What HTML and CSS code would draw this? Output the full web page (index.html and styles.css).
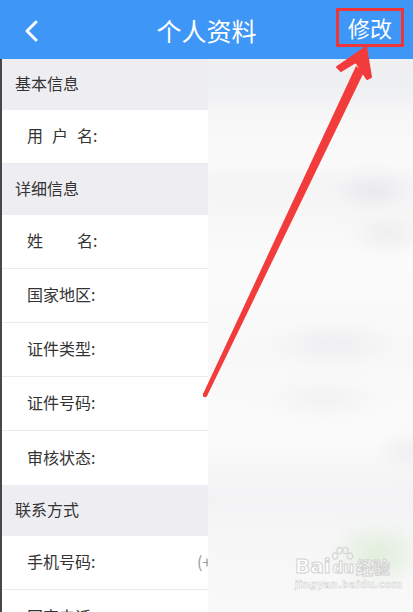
FILE: index.html
```html
<!DOCTYPE html>
<html lang="zh-CN">
<head>
    <meta charset="UTF-8">
    <meta name="viewport" content="width=device-width, initial-scale=1.0">
    <title>个人资料</title>
    <link rel="stylesheet" href="styles.css">
</head>
<body>
    <div class="page">
        <header class="topbar">
            <span class="back">
                <svg width="16" height="24" viewBox="0 0 16 24">
                    <polyline points="12,3 3,12 12,21" fill="none" stroke="#fff" stroke-width="3" stroke-linecap="round" stroke-linejoin="round"/>
                </svg>
            </span>
            <h1 class="title">个人资料</h1>
            <span class="edit"><span class="edit-box">修改</span></span>
        </header>

        <div class="list">
            <div class="section">基本信息</div>
            <div class="row"><span class="label"><span class="name">用户名</span>:</span></div>

            <div class="section">详细信息</div>
            <div class="row"><span class="label"><span class="name">姓名</span>:</span></div>
            <div class="row"><span class="label">国家地区:</span></div>
            <div class="row"><span class="label">证件类型:</span></div>
            <div class="row"><span class="label">证件号码:</span></div>
            <div class="row last"><span class="label">审核状态:</span></div>

            <div class="section">联系方式</div>
            <div class="row"><span class="label">手机号码:</span><span class="value">(+</span></div>
            <div class="row last"><span class="label">固定电话:</span></div>

            <!-- 打码区域 -->
            <div class="mosaic"><div class="mosaic-inner"></div></div>
        </div>

        <div class="watermark">
            <div class="wm-logo">
                <span class="wm-bai">Bai</span>
                <span class="wm-du">
                    <svg class="paw" width="26" height="16" viewBox="0 0 26 16">
                        <g fill="none" stroke="#d6d6d6" stroke-width="1.2">
                            <ellipse cx="6" cy="10" rx="2.6" ry="3.2"/>
                            <ellipse cx="10.5" cy="4.5" rx="2.6" ry="3.2"/>
                            <ellipse cx="16.5" cy="4.5" rx="2.6" ry="3.2"/>
                            <ellipse cx="21" cy="10" rx="2.6" ry="3.2"/>
                        </g>
                    </svg>du</span>
                <span class="wm-jy">经验</span>
            </div>
            <div class="wm-url">jingyan.baidu.com</div>
        </div>

        <svg class="arrow" width="413" height="612" viewBox="0 0 413 612">
            <polygon points="203,394 207,396 364,72 356,66" fill="#f23b3b"/>
            <polygon points="366,47 337,67 341,71 356,62 367,79 371,77" fill="#f23b3b" stroke="#f23b3b" stroke-width="2" stroke-linejoin="round"/>
            <circle cx="205" cy="395" r="2.2" fill="#f23b3b"/>
        </svg>
    </div>
</body>
</html>
```

FILE: styles.css
```css
body {
    margin: 0;
    font-family: "Noto Sans CJK SC", "Noto Sans", sans-serif;
    background-color: #ffffff;
}
.page {
    position: relative;
    width: 413px;
    height: 612px;
    overflow: hidden;
}
.topbar {
    display: grid;
    grid-template-columns: 1fr auto 1fr;
    align-items: center;
    height: 59px;
    background-color: #3e97f6;
    color: #ffffff;
}
.back {
    display: flex;
    align-items: center;
    padding-left: 24px;
    padding-top: 2px;
}
.title {
    margin: 0;
    font-size: 25px;
    font-weight: normal;
    line-height: 1;
    padding-top: 1px;
}
.edit {
    display: flex;
    justify-content: flex-end;
    padding-right: 9px;
    padding-bottom: 4px;
}
.edit-box {
    display: block;
    border: 3px solid #ef3535;
    padding: 0 9px;
    height: 33px;
    line-height: 33px;
    font-size: 22px;
}
.list {
    position: relative;
    border-left: 2px solid #474747;
}
.section {
    height: 51px;
    line-height: 49px;
    padding-left: 13px;
    background-color: #eeeef2;
    color: #333333;
    font-size: 16px;
}
.row {
    display: flex;
    align-items: center;
    box-sizing: border-box;
    height: 54px;
    padding-left: 25px;
    padding-bottom: 3px;
    border-bottom: 1px solid #ebebeb;
    color: #333333;
    font-size: 16px;
    background-color: #ffffff;
}
.row.last {
    border-bottom: none;
}
.label {
    width: 170px;
}
.name {
    display: inline-block;
    width: 66px;
    text-align: justify;
    text-align-last: justify;
}
.value {
    color: #9a9a9a;
}
.mosaic {
    position: absolute;
    top: 0;
    left: 206px;
    right: 0;
    bottom: 0;
    overflow: hidden;
}
.mosaic-inner {
    position: absolute;
    top: -10px;
    left: -10px;
    right: -20px;
    bottom: -20px;
    background:
        radial-gradient(ellipse 40px 20px at 175px 142px, rgba(226, 226, 229, 0.7), rgba(240, 240, 242, 0)),
        radial-gradient(ellipse 40px 22px at 190px 185px, rgba(230, 230, 233, 0.6), rgba(240, 240, 242, 0)),
        radial-gradient(ellipse 70px 22px at 135px 295px, rgba(232, 232, 235, 0.7), rgba(240, 240, 242, 0)),
        radial-gradient(ellipse 60px 20px at 125px 350px, rgba(234, 234, 237, 0.6), rgba(240, 240, 242, 0)),
        radial-gradient(ellipse 40px 22px at 215px 402px, rgba(230, 230, 233, 0.6), rgba(240, 240, 242, 0)),
        radial-gradient(ellipse 50px 35px at 180px 505px, rgba(220, 236, 214, 0.9), rgba(240, 244, 238, 0)),
        linear-gradient(to bottom, #efeff2 0px, #eff0f2 44px, #f7f7f8 66px, #fafafa 110px, #f4f4f6 135px, #f6f6f7 160px, #fbfbfb 210px, #f8f8f9 310px, #fbfbfb 390px, #f2f2f4 450px, #f6f6f7 480px, #f9f9f9 563px);
    filter: blur(6px);
}
.watermark {
    position: absolute;
    left: 295px;
    top: 556px;
    color: #ffffff;
}
.wm-logo {
    display: flex;
    align-items: flex-end;
    font-family: "DejaVu Sans", sans-serif;
    font-weight: bold;
    font-size: 20px;
    line-height: 20px;
    -webkit-text-stroke: 1px #d2d2d2;
}
.wm-du {
    position: relative;
    font-size: 15px;
    line-height: 16px;
    margin-left: 2px;
}
.paw {
    position: absolute;
    left: -4px;
    top: -14px;
}
.wm-jy {
    font-family: "Noto Sans CJK SC", sans-serif;
    font-size: 17px;
    line-height: 18px;
    margin-left: 2px;
}
.wm-url {
    margin-top: 3px;
    font-family: "DejaVu Sans", sans-serif;
    font-size: 10px;
    font-weight: bold;
    letter-spacing: 0.2px;
    -webkit-text-stroke: 0.6px #d2d2d2;
}
.arrow {
    position: absolute;
    left: 0;
    top: 0;
    pointer-events: none;
}
```
